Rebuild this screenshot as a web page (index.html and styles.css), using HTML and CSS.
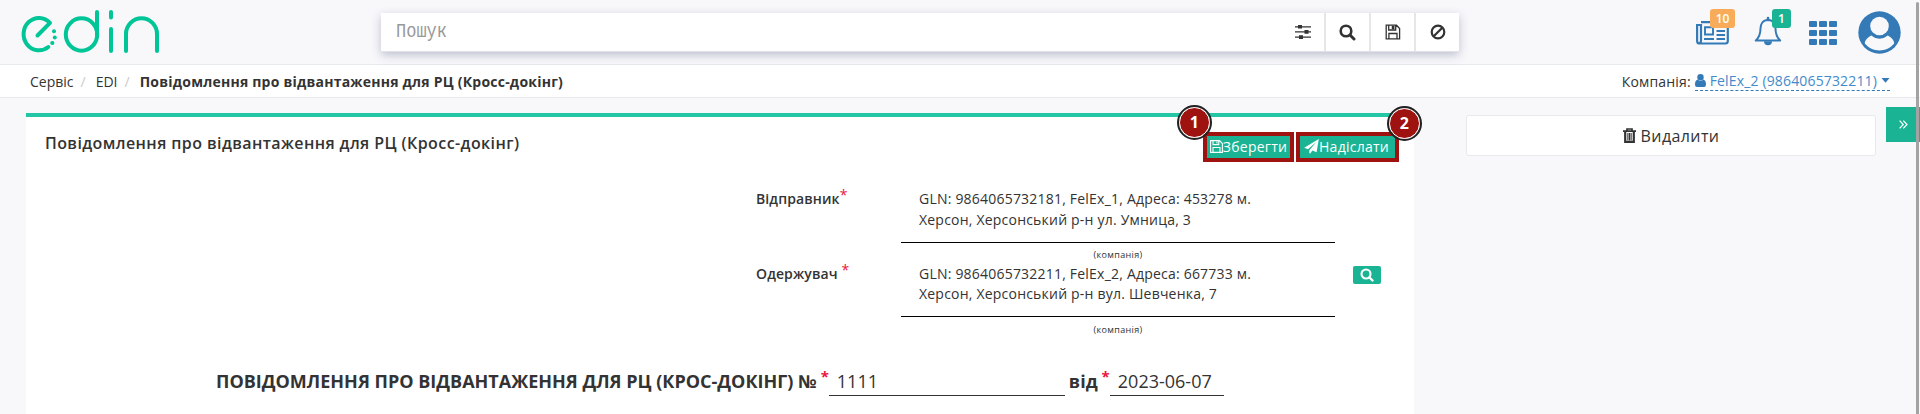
FILE: index.html
```html
<!DOCTYPE html>
<html lang="uk">
<head>
<meta charset="utf-8">
<title>EDIN</title>
<link rel="stylesheet" href="styles.css">
</head>
<body>
<header class="topbar">
  <svg class="logo" width="160" height="56" viewBox="0 0 160 56" fill="none" stroke="#00c597" stroke-width="4" stroke-linecap="round" stroke-linejoin="round">
    <path d="M37.500 35.500 50 22.800A15.400 16.200 0 1 0 48.300 47"/>
    <ellipse cx="81.500" cy="34.500" rx="15.700" ry="16.200"/>
    <path d="M97 12V35M111 12V17.500M111 29V51M126 51V34a15.500 15.800 0 0 1 31 0V51"/>
    <g fill="#00c597" stroke="none"><circle cx="54" cy="31.300" r="2"/><circle cx="54.800" cy="37.600" r="2"/><circle cx="52.300" cy="43" r="2.100"/></g>
  </svg>
  <div class="search">
    <span class="search-input">Пошук</span>
    <button class="search-btn filter"><svg width="16" height="14" viewBox="0 0 16 14" fill="#333"><path d="M0 1.200h16v1.300H0zM0 6.300h16v1.300H0zM0 11.400h16v1.300H0z"/><path d="M3 0h4v3.600H3zM9.500 5.100h4v3.700h-4zM4 10.200h4v3.700H4z"/></svg></button>
    <button class="search-btn"><svg width="17" height="17" viewBox="0 0 17 17" fill="none" stroke="#333"><circle cx="7" cy="7" r="5.300" stroke-width="2.600"/><path d="m11 11 4 4" stroke-width="3" stroke-linecap="round"/></svg></button>
    <button class="search-btn"><svg width="16" height="16" viewBox="0 0 16 16" fill="none" stroke="#333" stroke-width="1.300"><path d="M1.200 1.200H11.500L14.600 4.500V14.800H1.200zM3.700 1.500V6H10.700V1.500M3.900 14.500V9.500H12V14.500"/><path d="M7.400 2.300h1.400v2.400H7.400z" fill="#333"/></svg></button>
    <button class="search-btn"><svg width="16" height="16" viewBox="0 0 16 16" fill="none" stroke="#333" stroke-width="2.200"><circle cx="8" cy="8" r="6.300"/><path d="M3.700 12.300 12.300 3.700"/></svg></button>
  </div>
  <nav class="tools">
    <span class="tool news">
      <svg width="33" height="24" viewBox="0 0 33 24" fill="none" stroke="#337ab7" stroke-width="2.200"><path d="M5 1.200H31.800V20Q31.800 22.500 29.500 22.500H3.500Q1.100 22.500 1.100 20V4H5V19.500Q5 22 3.200 22.300"/><path d="M9 6.300H17V13.500H9zM20.500 5.800H29M20.500 10H29M20.500 14H29M8 18H18M20.500 18H29" stroke-width="1.900"/></svg>
      <span class="badge orange">10</span>
    </span>
    <span class="tool bell">
      <svg width="28" height="30" viewBox="0 0 28 30" fill="none" stroke="#337ab7" stroke-width="2"><path d="M14 4C8.500 4 6.500 8.500 6.500 12.500 6.500 18.500 4.500 22 1.800 24.500H26.200C23.500 22 21.500 18.500 21.500 12.500 21.500 8.500 19.500 4 14 4z" stroke-linejoin="round"/><path d="M14 2V4" stroke-width="2.600" stroke-linecap="round"/><path d="M10 25.300H18A4 4 0 0 1 10 25.300z" fill="#337ab7" stroke="none"/></svg>
      <span class="badge green">1</span>
    </span>
    <span class="apps"><i></i><i></i><i></i><i></i><i></i><i></i><i></i><i></i><i></i></span>
    <svg class="avatar" width="43" height="43" viewBox="0 0 43 43"><circle cx="21.500" cy="21.500" r="21.200" fill="#337ab7"/><path d="M13.200 24.600C8.500 27 6.800 30 6.800 32.500 10.500 37 16 39.400 21.500 39.400S32.500 37 36.200 32.500C36.200 30 34.500 27 29.800 24.600A12.500 12.500 0 0 1 13.200 24.600z" fill="#f8f8fb"/><circle cx="21.500" cy="15" r="9.300" fill="#f8f8fb"/></svg>
  </nav>
</header>
<div class="crumbs">
  <span>Сервіс</span><i class="sep">/</i><span>EDI</span><i class="sep">/</i><b>Повідомлення про відвантаження для РЦ (Кросс-докінг)</b>
  <div class="company"><span>Компанія:</span><a class="company-link"><svg width="11" height="13" viewBox="0 0 11 13" fill="#337ab7"><circle cx="5.500" cy="3.300" r="3.200"/><path d="M2.500 5.600Q5.500 8 8.500 5.600 11 6.500 11 10.500 11 13 9 13H2Q0 13 0 10.500 0 6.500 2.500 5.600z"/></svg><span>FelEx_2 (9864065732211)</span><svg width="9" height="5" viewBox="0 0 8 5" fill="#337ab7"><path d="M0 0H8L4 4.800z"/></svg></a></div>
</div>
<main class="content">
  <section class="panel">
    <div class="panel-head">
      <h1>Повідомлення про відвантаження для РЦ (Кросс-докінг)</h1>
      <div class="actions">
        <button class="action save"><svg width="13" height="13" viewBox="0 0 13 13" fill="none" stroke="#fff" stroke-width="1.100"><path d="M.6.6H9.500L12.400 3.500V12.400H.6zM3 .8V4.600H8.800V.8M3 12.200V7.500H10V12.200M7 1.500V3.500"/></svg>Зберегти<span class="marker m1">1</span></button>
        <button class="action send"><svg width="15" height="15" viewBox="0 0 15 15" fill="#fff"><path d="M14.800.1 12.600 13.300 8.400 11.500 6.200 14.600 5.300 14.300V11.200L12.600 2.700 4 10.200.2 8.700z"/></svg>Надіслати<span class="marker m2">2</span></button>
      </div>
    </div>
    <div class="party">
      <label>Відправник<sup>*</sup></label>
      <div class="value"><p>GLN: 9864065732181, FelEx_1, Адреса: 453278 м.<br>Херсон, Херсонський р-н ул. Умница, 3</p><small>(компанія)</small></div>
    </div>
    <div class="party second">
      <label>Одержувач <sup>*</sup></label>
      <div class="value"><p>GLN: 9864065732211, FelEx_2, Адреса: 667733 м.<br>Херсон, Херсонський р-н вул. Шевченка, 7</p><small>(компанія)</small></div>
      <button class="find"><svg width="14" height="14" viewBox="0 0 14 14" fill="none" stroke="#fff"><circle cx="6" cy="6" r="4.500" stroke-width="2.100"/><path d="m9.500 9.500 3 3" stroke-width="2.400" stroke-linecap="round"/></svg></button>
    </div>
    <div class="doc">
      <b class="doc-name">ПОВІДОМЛЕННЯ ПРО ВІДВАНТАЖЕННЯ ДЛЯ РЦ (КРОС-ДОКІНГ) №</b><sup>*</sup>
      <span class="field number">1111</span>
      <b class="from">від</b><sup>*</sup>
      <span class="field date">2023-06-07</span>
    </div>
  </section>
  <aside class="side">
    <button class="delete"><svg width="13" height="15" viewBox="0 0 13 15" fill="none" stroke="#333"><path d="M0 3.200H13M4 3V1H9V3" stroke-width="1.700"/><path d="M2.200 4V13.800H10.800V4" stroke-width="2.200"/><path d="M4.900 5V12.500M6.500 5V12.500M8.100 5V12.500" stroke-width="1.100"/></svg>Видалити</button>
  </aside>
  <button class="expand"><svg width="9" height="9" viewBox="0 0 9 9" fill="none" stroke="#fff" stroke-width="1.200"><path d="m.6.6 3.700 3.900-3.700 3.900M4.300.6 8 4.500 4.300 8.400"/></svg></button>
</main>
<div class="scrollbar"></div>
</body>
</html>
```
FILE: styles.css
```css
* { box-sizing: border-box; }
body { margin: 0; height: 414px; overflow: hidden; background: #f8f8fb; color: #333; font: 14px "Open Sans", "Noto Sans", sans-serif; }
button { border: 0; padding: 0; margin: 0; font: inherit; color: inherit; display: flex; align-items: center; justify-content: center; }
svg { flex: none; }
i { font-style: normal; }
.topbar { height: 65px; border-bottom: 1px solid #e7eaec; display: flex; align-items: flex-start; }
.logo { width: 160px; margin-right: 221px; }
.search { width: 1078px; height: 39px; margin-top: 13px; flex: none; display: flex; background: #fff; border-bottom: 1px solid #e0e2ea; box-shadow: 0 3px 9px rgba(60, 60, 110, .3); }
.search-input { flex: 1; padding-left: 15px; font: 17px/38px "Liberation Mono", monospace; color: #999; transform: scaleY(1.17); }
.search-btn { width: 45px; background: #fff; border-left: 2px solid #e5e6e7; }
.search-btn.filter { border: 0; width: 40px; padding-right: 2px; }
.tools { display: flex; align-items: flex-start; }
.tool { position: relative; }
.news { margin: 21px 0 0 237px; }
.bell { margin: 16px 0 0 25px; }
.tool svg { display: block; }
.badge { position: absolute; height: 19px; border-radius: 3px; color: #fff; font-size: 12px; font-weight: 600; line-height: 19px; text-align: center; }
.orange { background: #f8ac59; left: 14px; top: -12px; width: 25px; }
.green { background: #1ab394; left: 18px; top: -7px; width: 19px; }
.apps { margin: 21px 0 0 27px; display: grid; grid-template-columns: repeat(3, 8px); grid-auto-rows: 6px; gap: 3px 2px; }
.apps i { background: #337ab7; border-radius: 1px; }
.avatar { margin: 11px 0 0 21px; }
.crumbs { height: 33px; background: #fff; border-bottom: 1px solid #e7eaec; display: flex; align-items: center; padding-left: 30px; }
.crumbs b { letter-spacing: .22px; }
.sep { color: #ccc; margin: 0 10px 0 7px; }
.company { margin-left: auto; margin-right: 30px; display: flex; gap: 4px; letter-spacing: .15px; }
.company-link { display: flex; align-items: center; gap: 4px; color: #428bca; border-bottom: 1px dashed #337ab7; height: 19px; }
.content { display: flex; align-items: flex-start; height: 316px; }
.panel { margin: 15px 0 0 26px; width: 1388px; height: 301px; flex: none; background: #fff; border-top: 4px solid #23c6a5; }
.panel-head { height: 60px; display: flex; justify-content: space-between; padding-left: 19px; padding-right: 15px; }
h1 { font-size: 16px; font-weight: 600; letter-spacing: .41px; margin: 15px 0 0; line-height: 22px; }
.actions { display: flex; gap: 2px; padding-top: 15px; }
.action { position: relative; height: 30px; padding-bottom: 2px; border: 4px solid #9e120f; background: #1ab394; color: #fff; letter-spacing: .25px; }
.save { width: 91px; }
.send { width: 103px; padding-right: 2px; }
.marker { position: absolute; width: 31px; height: 31px; border: 1px solid #fff; outline: 2px solid #222; border-radius: 50%; background: #9e120f; font: bold 16px/29px "Open Sans", sans-serif; }
.m1 { left: -28px; top: -29px; }
.m2 { right: -25px; top: -28px; }
.party { height: 75px; display: flex; padding-left: 730px; }
label { width: 145px; font-weight: 600; padding-top: 12px; line-height: 20px; letter-spacing: .12px; }
sup { color: #ed143d; font-size: 14px; font-weight: 400; line-height: 0; vertical-align: 4px; }
.value { width: 434px; text-align: center; }
.value p { margin: 0; height: 66px; border-bottom: 1px solid #000; padding: 11px 18px 0; text-align: left; line-height: 21px; letter-spacing: .21px; }
.second p { height: 65px; padding-top: 12px; line-height: 20px; }
.second small { padding-top: 1px; }
.value small { display: block; font-size: 9px; line-height: 24px; letter-spacing: .35px; }
.find { margin: 14px 0 0 18px; width: 28px; height: 18px; border-radius: 2px; background: #1ab394; }
.doc { display: flex; align-items: flex-start; padding: 40px 0 0 190px; font-size: 18px; line-height: 28px; }
.doc sup { font-weight: 700; font-size: 15px; line-height: 18px; margin-left: 4px; }
.field { border-bottom: 1px solid #333; height: 29px; padding-left: 8px; }
.number { width: 236px; margin-right: 4px; }
.date { width: 114px; }
.side { margin: 17px 0 0 52px; width: 410px; flex: none; }
.delete { width: 410px; height: 41px; background: #fff; border: 1px solid #e7eaec; border-radius: 3px; font-size: 16px; letter-spacing: .4px; gap: 5px; }
.expand { margin: 9px 0 0 10px; width: 34px; height: 35px; background: #1ab394; }
.scrollbar { position: absolute; left: 1916px; top: 2px; width: 3px; height: 412px; background: #a3a3a3; border-radius: 2px 2px 0 0; }
```
